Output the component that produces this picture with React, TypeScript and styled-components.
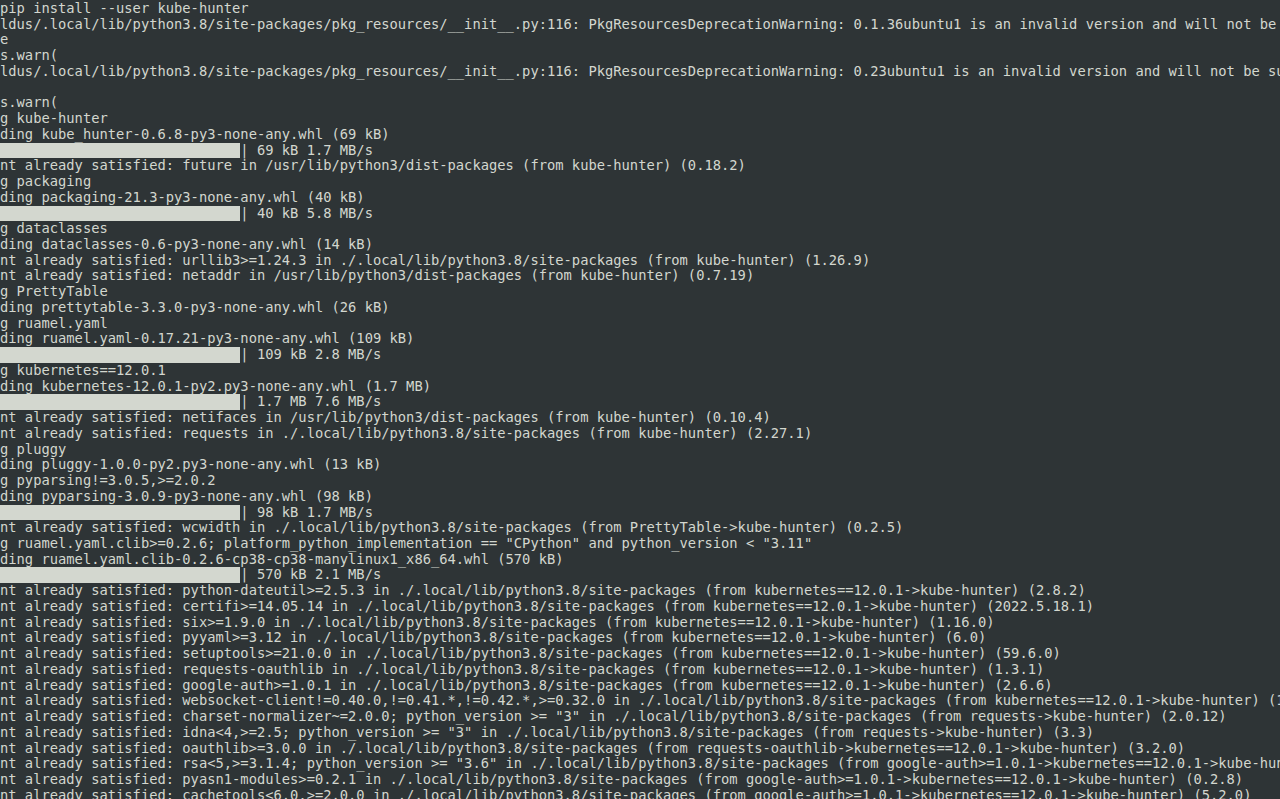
import React from "react";
import styled, { createGlobalStyle } from "styled-components";

const Global = createGlobalStyle`
  html, body { margin: 0; padding: 0; background: #2e3436; }
  body { overflow: hidden; }
`;

const Terminal = styled.div`
  width: 1280px;
  height: 799px;
  overflow: hidden;
  background: #2e3436;
  color: #d3d7cf;
  font-family: "DejaVu Sans Mono", "Liberation Mono", monospace;
  font-size: 13.78px;
  line-height: 15.74px;
  display: flex;
  flex-direction: column;
`;

const Line = styled.div`
  white-space: pre;
  height: 15.74px;
  box-sizing: border-box;
  padding-top: 1px;
  flex: none;
  display: flex;
  align-items: flex-start;
`;

const Bar = styled.span<{ $cols: number }>`
  display: inline-block;
  flex: none;
  width: ${(p) => p.$cols}ch;
  height: 15.5px;
  margin-top: 0;
  background: #d3d7cf;
`;

type Row = string | { bar: string };

const rows: Row[] = [
  "pip install --user kube-hunter",
  "ldus/.local/lib/python3.8/site-packages/pkg_resources/__init__.py:116: PkgResourcesDeprecationWarning: 0.1.36ubuntu1 is an invalid version and will not be supported",
  "e",
  "s.warn(",
  "ldus/.local/lib/python3.8/site-packages/pkg_resources/__init__.py:116: PkgResourcesDeprecationWarning: 0.23ubuntu1 is an invalid version and will not be supported",
  "",
  "s.warn(",
  "g kube-hunter",
  "ding kube_hunter-0.6.8-py3-none-any.whl (69 kB)",
  { bar: "| 69 kB 1.7 MB/s" },
  "nt already satisfied: future in /usr/lib/python3/dist-packages (from kube-hunter) (0.18.2)",
  "g packaging",
  "ding packaging-21.3-py3-none-any.whl (40 kB)",
  { bar: "| 40 kB 5.8 MB/s" },
  "g dataclasses",
  "ding dataclasses-0.6-py3-none-any.whl (14 kB)",
  "nt already satisfied: urllib3>=1.24.3 in ./.local/lib/python3.8/site-packages (from kube-hunter) (1.26.9)",
  "nt already satisfied: netaddr in /usr/lib/python3/dist-packages (from kube-hunter) (0.7.19)",
  "g PrettyTable",
  "ding prettytable-3.3.0-py3-none-any.whl (26 kB)",
  "g ruamel.yaml",
  "ding ruamel.yaml-0.17.21-py3-none-any.whl (109 kB)",
  { bar: "| 109 kB 2.8 MB/s" },
  "g kubernetes==12.0.1",
  "ding kubernetes-12.0.1-py2.py3-none-any.whl (1.7 MB)",
  { bar: "| 1.7 MB 7.6 MB/s" },
  "nt already satisfied: netifaces in /usr/lib/python3/dist-packages (from kube-hunter) (0.10.4)",
  "nt already satisfied: requests in ./.local/lib/python3.8/site-packages (from kube-hunter) (2.27.1)",
  "g pluggy",
  "ding pluggy-1.0.0-py2.py3-none-any.whl (13 kB)",
  "g pyparsing!=3.0.5,>=2.0.2",
  "ding pyparsing-3.0.9-py3-none-any.whl (98 kB)",
  { bar: "| 98 kB 1.7 MB/s" },
  "nt already satisfied: wcwidth in ./.local/lib/python3.8/site-packages (from PrettyTable->kube-hunter) (0.2.5)",
  'g ruamel.yaml.clib>=0.2.6; platform_python_implementation == "CPython" and python_version < "3.11"',
  "ding ruamel.yaml.clib-0.2.6-cp38-cp38-manylinux1_x86_64.whl (570 kB)",
  { bar: "| 570 kB 2.1 MB/s" },
  "nt already satisfied: python-dateutil>=2.5.3 in ./.local/lib/python3.8/site-packages (from kubernetes==12.0.1->kube-hunter) (2.8.2)",
  "nt already satisfied: certifi>=14.05.14 in ./.local/lib/python3.8/site-packages (from kubernetes==12.0.1->kube-hunter) (2022.5.18.1)",
  "nt already satisfied: six>=1.9.0 in ./.local/lib/python3.8/site-packages (from kubernetes==12.0.1->kube-hunter) (1.16.0)",
  "nt already satisfied: pyyaml>=3.12 in ./.local/lib/python3.8/site-packages (from kubernetes==12.0.1->kube-hunter) (6.0)",
  "nt already satisfied: setuptools>=21.0.0 in ./.local/lib/python3.8/site-packages (from kubernetes==12.0.1->kube-hunter) (59.6.0)",
  "nt already satisfied: requests-oauthlib in ./.local/lib/python3.8/site-packages (from kubernetes==12.0.1->kube-hunter) (1.3.1)",
  "nt already satisfied: google-auth>=1.0.1 in ./.local/lib/python3.8/site-packages (from kubernetes==12.0.1->kube-hunter) (2.6.6)",
  "nt already satisfied: websocket-client!=0.40.0,!=0.41.*,!=0.42.*,>=0.32.0 in ./.local/lib/python3.8/site-packages (from kubernetes==12.0.1->kube-hunter) (1.3.2)",
  'nt already satisfied: charset-normalizer~=2.0.0; python_version >= "3" in ./.local/lib/python3.8/site-packages (from requests->kube-hunter) (2.0.12)',
  'nt already satisfied: idna<4,>=2.5; python_version >= "3" in ./.local/lib/python3.8/site-packages (from requests->kube-hunter) (3.3)',
  "nt already satisfied: oauthlib>=3.0.0 in ./.local/lib/python3.8/site-packages (from requests-oauthlib->kubernetes==12.0.1->kube-hunter) (3.2.0)",
  'nt already satisfied: rsa<5,>=3.1.4; python_version >= "3.6" in ./.local/lib/python3.8/site-packages (from google-auth>=1.0.1->kubernetes==12.0.1->kube-hunter) (4.8)',
  "nt already satisfied: pyasn1-modules>=0.2.1 in ./.local/lib/python3.8/site-packages (from google-auth>=1.0.1->kubernetes==12.0.1->kube-hunter) (0.2.8)",
  "nt already satisfied: cachetools<6.0,>=2.0.0 in ./.local/lib/python3.8/site-packages (from google-auth>=1.0.1->kubernetes==12.0.1->kube-hunter) (5.2.0)",
];

export default function App() {
  return (
    <>
      <Global />
      <Terminal>
        {rows.map((r, i) =>
          typeof r === "string" ? (
            <Line key={i}>{r}</Line>
          ) : (
            <Line key={i}>
              <Bar $cols={29} />
              <span>{r.bar}</span>
            </Line>
          )
        )}
      </Terminal>
    </>
  );
}
